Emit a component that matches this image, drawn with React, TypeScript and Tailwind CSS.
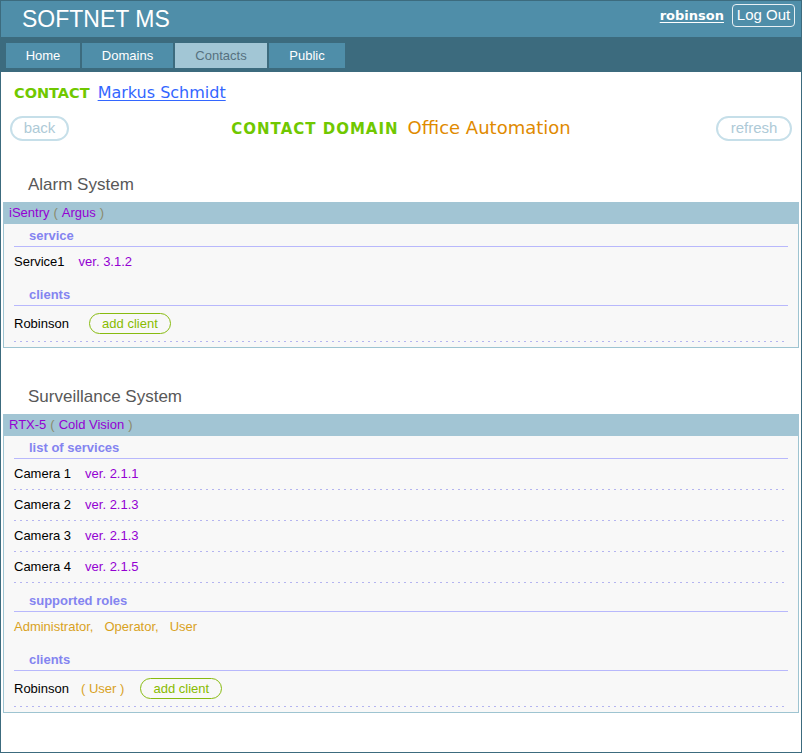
import React from "react";

const dotted =
  "h-px bg-[repeating-linear-gradient(to_right,#b4b4f0_0_2px,transparent_2px_6px)]";

function Heading({ text, first }: { text: string; first?: boolean }) {
  return (
    <div
      className={`${first ? "" : "mt-[6px]"} h-[23px] flex items-end pl-[15px] pb-[1px] border-b border-[#b8b8fc] text-[13px] font-bold text-[#8484f0] leading-[18px]`}
    >
      {text}
    </div>
  );
}

function ItemRow({ name, ver, dots = true }: { name: string; ver: string; dots?: boolean }) {
  return (
    <>
      <div className="h-[30px] flex items-center text-[13px] text-black">
        <span>{name}</span>
        <span className="ml-[14px] text-[#9400d3]">{ver}</span>
      </div>
      {dots && <div className={dotted} />}
    </>
  );
}

function AddClient({ ml }: { ml: string }) {
  return (
    <span
      className={`${ml} w-[82px] h-[21px] rounded-full border border-[#88bb10] text-[#88bb00] text-[13px] flex items-center justify-center`}
    >
      add client
    </span>
  );
}

function Panel({
  title,
  name,
  maker,
  children,
  topGap,
}: {
  title: string;
  name: string;
  maker: string;
  children: React.ReactNode;
  topGap: string;
}) {
  return (
    <div className={topGap}>
      <div className="h-[22px] pl-[27px] text-[17px] leading-[22px] text-[#585858]">{title}</div>
      <div className="mx-[2px] mt-[6px]">
        <div className="h-[22px] bg-[#a2c5d4] flex items-center pl-[6px] text-[13px] text-[#9400d3]">
          <span>{name}</span>
          <span className="ml-[4px] text-[#8a8a6c]">(</span>
          <span className="ml-[4px]">{maker}</span>
          <span className="ml-[4px] text-[#8a8a6c]">)</span>
        </div>
        <div className="border-x border-b border-[#9ec4d1] bg-[#f8f8f8] px-[10px] pb-[5px]">{children}</div>
      </div>
    </div>
  );
}

export default function App() {
  return (
    <div className="w-[802px] h-[753px] border border-[#3c6b7e] bg-white font-['Liberation_Sans',Arial,sans-serif] overflow-hidden">
      {/* top bar */}
      <div className="h-[36px] bg-[#4f8ea9] flex justify-between pl-[21px] pr-[6px]">
        <div className="text-[23px] text-white leading-[36px]">SOFTNET MS</div>
        <div className="flex items-center gap-[8px] mt-[3px] h-[23px]">
          <span className="font-['DejaVu_Sans',Verdana,sans-serif] font-bold text-[13px] text-white underline underline-offset-[2px]">
            robinson
          </span>
          <span className="w-[63px] h-[23px] border border-[#e8f0f4] rounded-[4px] text-white text-[15px] flex items-center justify-center">
            Log Out
          </span>
        </div>
      </div>
      {/* nav */}
      <div className="h-[35px] bg-[#3c6b7e] flex gap-[2px] pl-[5px] pt-[6px]">
        <div className="h-[25px] w-[74px] bg-[#4f8ea9] text-white text-[13px] flex items-center justify-center">Home</div>
        <div className="h-[25px] w-[91px] bg-[#4f8ea9] text-white text-[13px] flex items-center justify-center">Domains</div>
        <div className="h-[25px] w-[92px] bg-[#a2c6d5] text-[#56717f] text-[13px] flex items-center justify-center">Contacts</div>
        <div className="h-[25px] w-[76px] bg-[#4f8ea9] text-white text-[13px] flex items-center justify-center">Public</div>
      </div>

      {/* contact row */}
      <div className="pt-[10px] pl-[13px] leading-[21px] font-['DejaVu_Sans',Verdana,sans-serif] flex items-baseline">
        <span className="text-[14.5px] font-bold text-[#70c800]">CONTACT</span>
        <span className="ml-[8px] text-[16px] text-[#3366ff] underline underline-offset-[2px]">Markus Schmidt</span>
      </div>

      {/* back / title / refresh */}
      <div className="mt-[11px] grid grid-cols-[1fr_auto_1fr] items-center pl-[9px] pr-[9px] h-[25px]">
        <span className="justify-self-start w-[59px] h-[25px] rounded-full border-2 border-[#c6dfe9] text-[#aecad7] text-[15px] flex items-center justify-center">
          back
        </span>
        <div className="font-['DejaVu_Sans',Verdana,sans-serif] leading-[25px] flex items-baseline">
          <span className="text-[15px] font-bold tracking-[1px] text-[#70c800]">CONTACT DOMAIN</span>
          <span className="ml-[9px] text-[18px] text-[#e08a00]">Office Automation</span>
        </div>
        <span className="justify-self-end w-[76px] h-[25px] rounded-full border-2 border-[#c6dfe9] text-[#aecad7] text-[15px] flex items-center justify-center">
          refresh
        </span>
      </div>

      <Panel title="Alarm System" name="iSentry" maker="Argus" topGap="mt-[34px]">
        <Heading text="service" first />
        <ItemRow name="Service1" ver="ver. 3.1.2" dots={false} />
        <Heading text="clients" />
        <div className="h-[35px] flex items-center text-[13px] text-black">
          <span>Robinson</span>
          <AddClient ml="ml-[20px]" />
        </div>
        <div className={dotted} />
      </Panel>

      <Panel title="Surveillance System" name="RTX-5" maker="Cold Vision" topGap="mt-[38px]">
        <Heading text="list of services" first />
        <ItemRow name="Camera 1" ver="ver. 2.1.1" />
        <ItemRow name="Camera 2" ver="ver. 2.1.3" />
        <ItemRow name="Camera 3" ver="ver. 2.1.3" />
        <ItemRow name="Camera 4" ver="ver. 2.1.5" />
        <Heading text="supported roles" />
        <div className="h-[30px] flex items-center text-[13px] text-[#d9a21e] gap-[11px]">
          <span>Administrator,</span>
          <span>Operator,</span>
          <span>User</span>
        </div>
        <Heading text="clients" />
        <div className="h-[35px] flex items-center text-[13px] text-black">
          <span>Robinson</span>
          <span className="ml-[12px] text-[#d9a21e]">( User )</span>
          <AddClient ml="ml-[16px]" />
        </div>
        <div className={dotted} />
      </Panel>
    </div>
  );
}
